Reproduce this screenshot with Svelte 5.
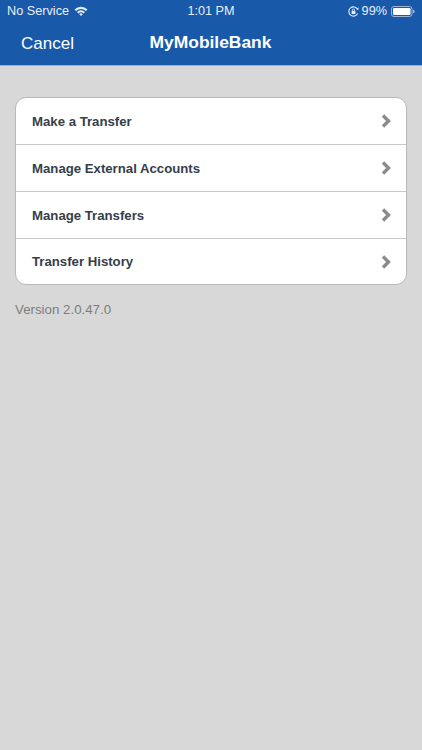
<script>
  const items = ['Make a Transfer', 'Manage External Accounts', 'Manage Transfers', 'Transfer History'];
</script>

<style>
  :global(body) {
    margin: 0;
    background: #d8d8d8;
    font-family: "Liberation Sans", Arial, sans-serif;
  }
  .page {
    height: 750px;
    background: #d8d8d8;
    overflow: hidden;
  }
  .header {
    height: 65px;
    background: #1859a9;
    border-bottom: 1px solid #9db0c6;
    color: #fff;
  }
  .status {
    height: 22px;
    display: grid;
    grid-template-columns: 1fr auto 1fr;
    align-items: center;
    padding: 0 7px;
    font-size: 12.7px;
    color: #e8eef6;
  }
  .status-left {
    display: flex;
    align-items: center;
    gap: 5px;
  }
  .status-right {
    display: flex;
    align-items: center;
    justify-content: flex-end;
    gap: 3px;
  }
  .status-right span {
    margin-right: 1px;
  }
  .nav {
    height: 43px;
    display: grid;
    grid-template-columns: 1fr auto 1fr;
    align-items: center;
    padding: 0 21px;
  }
  .cancel {
    font-size: 17px;
  }
  .title {
    font-size: 17.4px;
    font-weight: bold;
    margin: 0 1px 3px 0;
  }
  .content {
    padding: 31px 15px 0;
  }
  .list {
    background: #fff;
    border: 1px solid #b9b9b9;
    border-radius: 11px;
    overflow: hidden;
  }
  .row {
    height: 46px;
    display: flex;
    align-items: center;
    justify-content: space-between;
    padding: 0 15px 0 16px;
    border-bottom: 1px solid #c8c8c8;
    font-size: 13.2px;
    font-weight: bold;
    color: #353e4a;
  }
  .row:last-child {
    height: 45px;
    border-bottom: 0;
  }
  .version {
    margin-top: 17px;
    font-size: 13.3px;
    color: #7d7d7d;
  }
</style>

<div class="page">
  <div class="header">
    <div class="status">
      <div class="status-left">
        <span>No Service</span>
        <svg width="14" height="10" viewBox="0 0 14 10">
          <path d="M0.5 3.4 A9.5 9.5 0 0 1 13.5 3.4 L12 5 A7.4 7.4 0 0 0 2 5 Z" fill="#e8eef6" />
          <path d="M3 5.9 A6 6 0 0 1 11 5.9 L9.6 7.4 A4 4 0 0 0 4.4 7.4 Z" fill="#e8eef6" />
          <path d="M5.2 8.2 A2.6 2.6 0 0 1 8.8 8.2 L7 10 Z" fill="#e8eef6" />
        </svg>
      </div>
      <span>1:01 PM</span>
      <div class="status-right">
        <svg width="11" height="11" viewBox="0 0 11 11">
          <path d="M9.6 7.4 A4.6 4.6 0 1 1 9.6 3.6" fill="none" stroke="#e8eef6" stroke-width="1.1" />
          <path d="M8.4 3.2 L10.6 3.8 L10.4 1.4 Z" fill="#e8eef6" />
          <rect x="3.6" y="5" width="3.8" height="3" fill="#e8eef6" />
          <path d="M4.4 5 V4 A1.1 1.1 0 0 1 6.6 4 V5" fill="none" stroke="#e8eef6" stroke-width="0.8" />
        </svg>
        <span>99%</span>
        <svg width="24" height="11" viewBox="0 0 24 11">
          <rect x="0.5" y="0.5" width="20.5" height="10" rx="2.5" fill="none" stroke="#9fb6d4" />
          <rect x="2" y="2" width="17.5" height="7" rx="1.2" fill="#fff" />
          <path d="M22 3.8 A1.7 1.7 0 0 1 22 7.2 Z" fill="#9fb6d4" />
        </svg>
      </div>
    </div>
    <div class="nav">
      <span class="cancel">Cancel</span>
      <span class="title">MyMobileBank</span>
      <span></span>
    </div>
  </div>

  <div class="content">
    <div class="list">
      {#each items as item}
        <div class="row">
          <span>{item}</span>
          <svg width="10" height="14" viewBox="0 0 10 14">
            <path d="M2 1.5 L7.5 7 L2 12.5" fill="none" stroke="#8b8b8b" stroke-width="3.4" />
          </svg>
        </div>
      {/each}
    </div>
    <div class="version">Version 2.0.47.0</div>
  </div>
</div>
